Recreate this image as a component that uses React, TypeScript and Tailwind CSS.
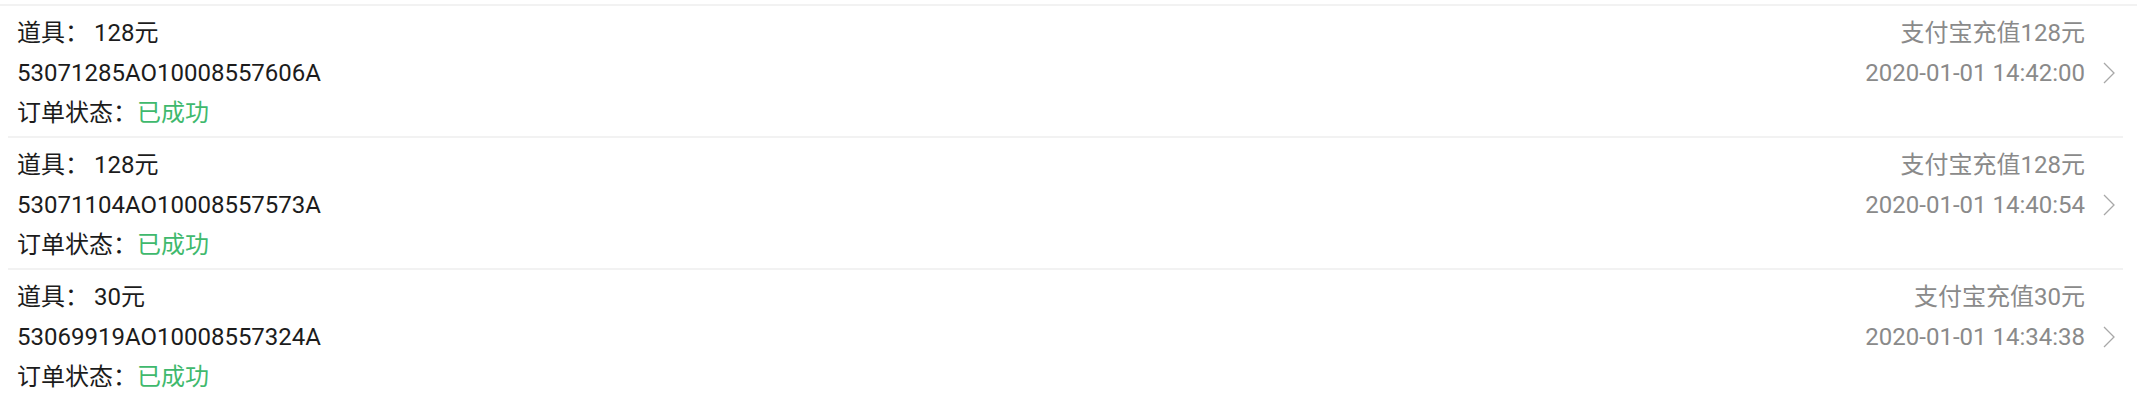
// Recharge order rows — static sample data.
const ORDERS = [
    { item: "128元", no: "53071285AO10008557606A", title: "支付宝充值128元", time: "2020-01-01 14:42:00" },
    { item: "128元", no: "53071104AO10008557573A", title: "支付宝充值128元", time: "2020-01-01 14:40:54" },
    { item: "30元", no: "53069919AO10008557324A", title: "支付宝充值30元", time: "2020-01-01 14:34:38" },
];

function Chevron() {
    return (
        <svg width="12" height="22" viewBox="0 0 12 22" fill="none" className="shrink-0">
            <polyline points="1,1 11,11 1,21" stroke="#a8a8a8" strokeWidth="1.3" />
        </svg>
    );
}

function OrderRow({ order }: { order: (typeof ORDERS)[number] }) {
    return (
        <div className="ml-2 mr-[14px] flex border-b-2 border-[#f2f2f2] pb-[3px] pl-[9px] pr-[8px] pt-[7px]">
            <div className="flex flex-1 flex-col text-[#1c1c1c]">
                <div className="h-10 leading-10">
                    道具：<span className="ml-[5px]">{order.item}</span>
                </div>
                <div className="h-10 leading-10">{order.no}</div>
                <div className="h-10 leading-10">
                    订单状态：<span className="text-[#3fb96d]">已成功</span>
                </div>
            </div>
            <div className="flex flex-col items-end text-[#8a8a8a]">
                <div className="mr-[30px] h-10 leading-10">{order.title}</div>
                <div className="flex h-10 items-center gap-[18px] leading-10">
                    <span>{order.time}</span>
                    <Chevron />
                </div>
            </div>
        </div>
    );
}

export default function App() {
    return (
        <div
            className="min-h-[400px] bg-white text-[24px]"
            style={{ fontFamily: 'Roboto, "Noto Sans CJK SC", sans-serif' }}
        >
            <div className="h-[6px] border-b-2 border-[#f2f2f2]" />
            {ORDERS.map((o) => (
                <OrderRow key={o.no} order={o} />
            ))}
        </div>
    );
}
